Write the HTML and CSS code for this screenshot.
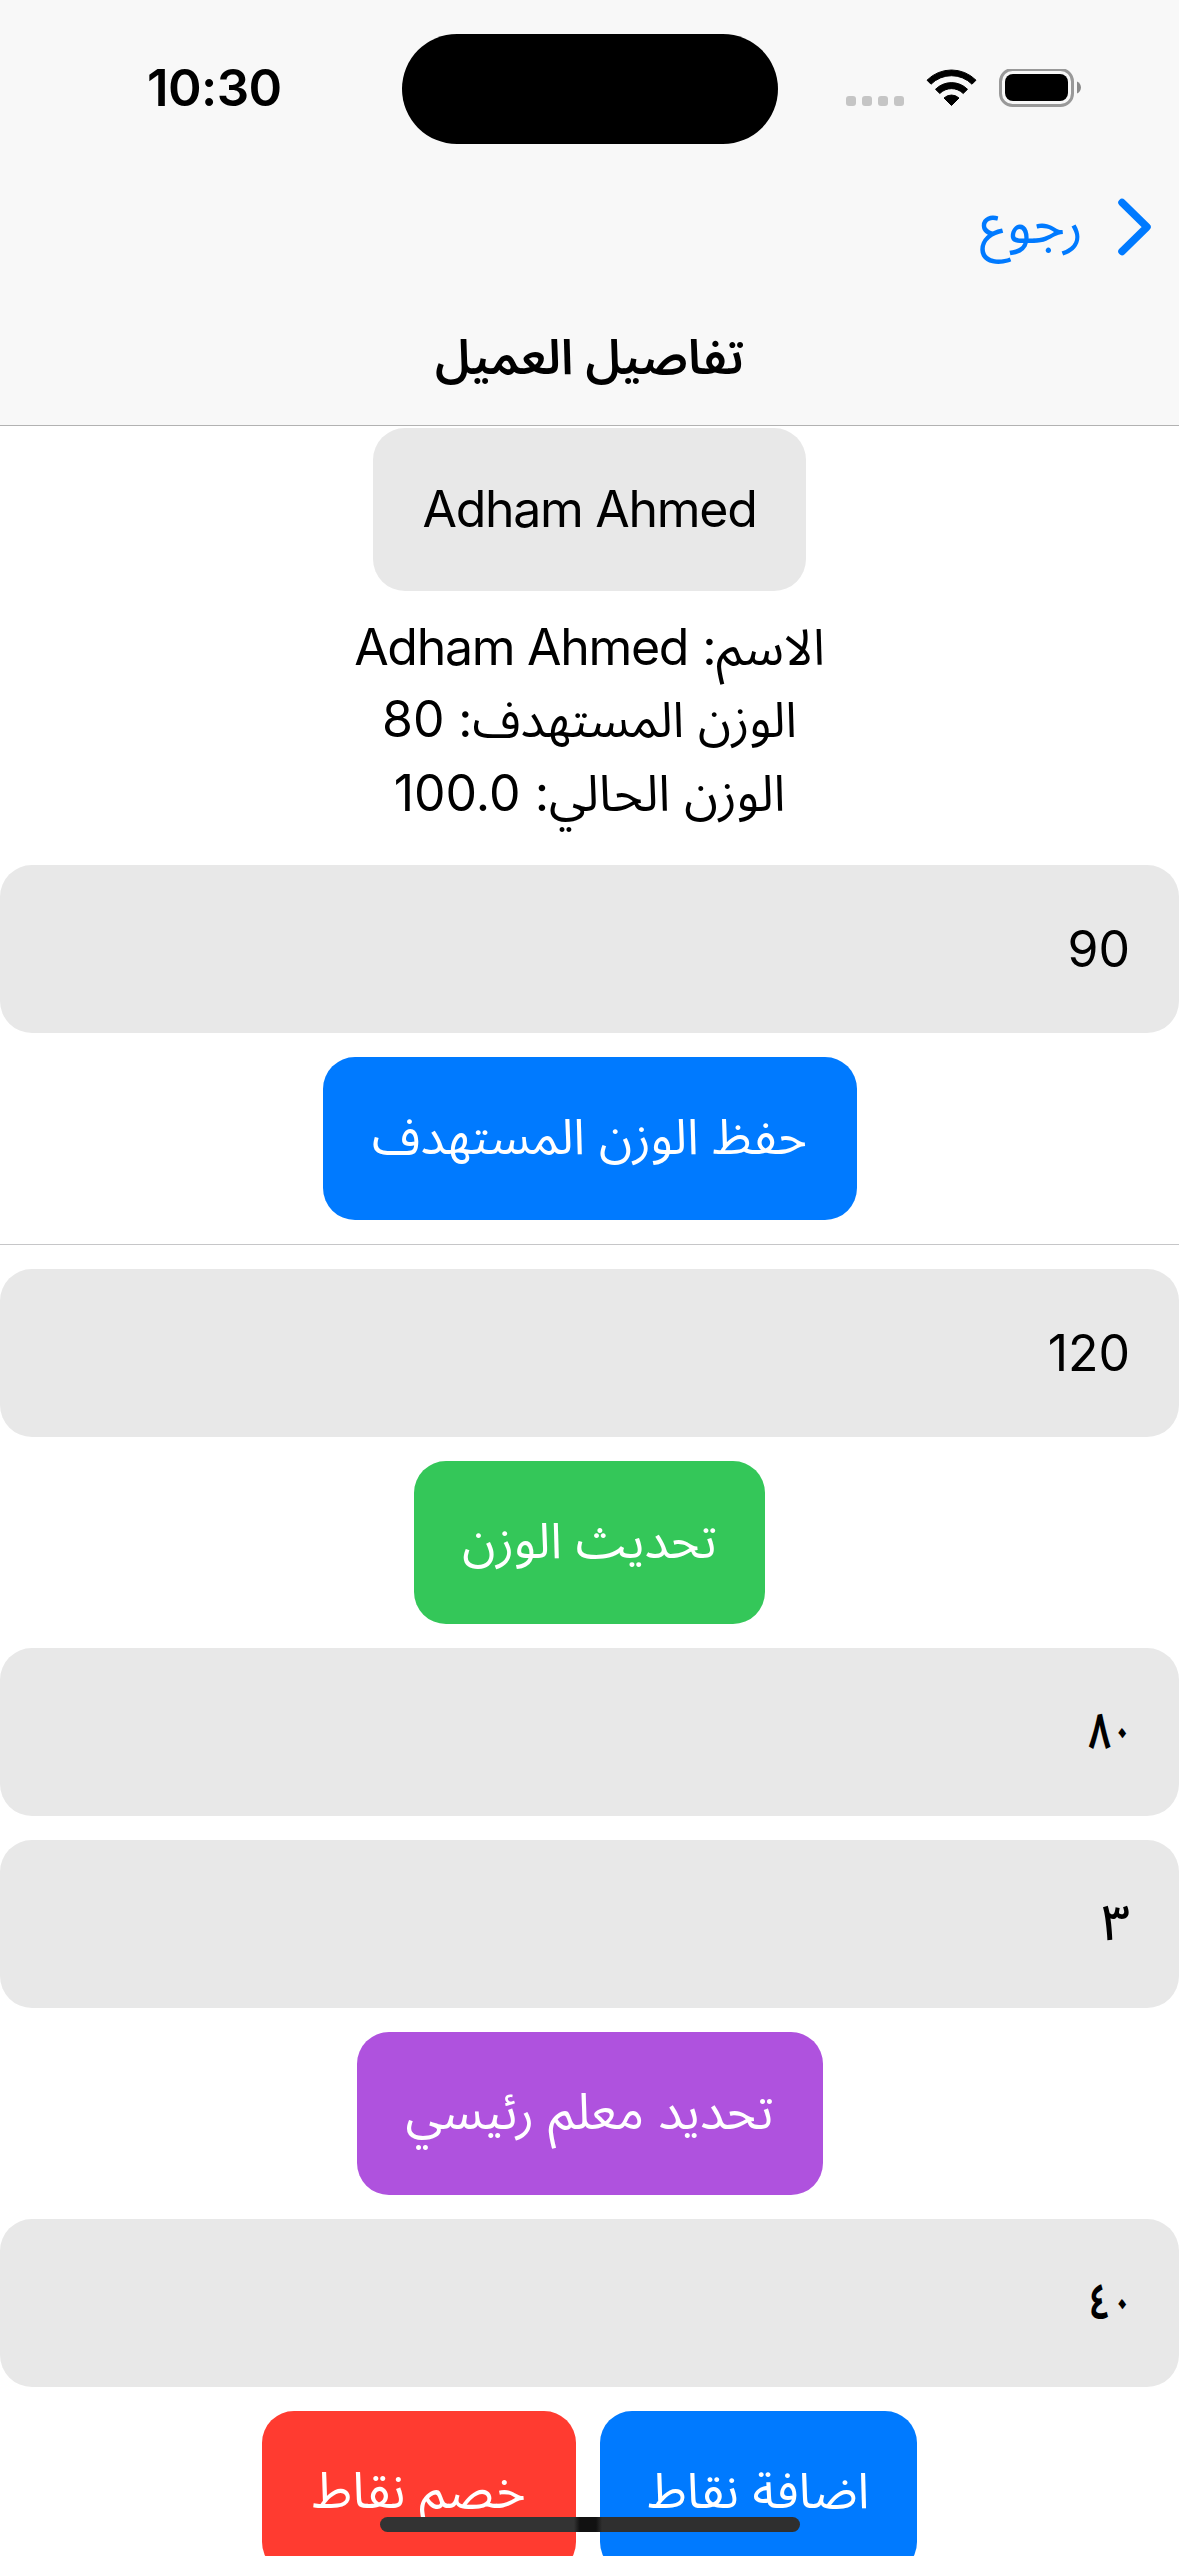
FILE: index.html
```html
<!DOCTYPE html>
<html lang="ar" dir="rtl">
<head>
<meta charset="utf-8">
<title>تفاصيل العميل</title>
<link rel="stylesheet" href="styles.css">
</head>
<body>
<div class="screen">
  <header class="header">
    <div class="status" dir="ltr">
      <div class="time">10:30</div>
      <div class="island"></div>
      <svg class="status-icons" width="236" height="40" viewBox="0 0 236 40">
        <g fill="#c5c5c5"><rect x="0" y="27" width="10" height="10" rx="3"/><rect x="16" y="27" width="10" height="10" rx="3"/><rect x="32" y="27" width="10" height="10" rx="3"/><rect x="48" y="27" width="10" height="10" rx="3"/></g>
        <path d="M81 11.2A34.500 34.500 0 0 1 130 11.200L126 15.200A29 29 0 0 0 85 15.200ZM89.500 20.300A22.500 22.500 0 0 1 121.500 20.300L117.200 24.500A16.500 16.500 0 0 0 93.800 24.500ZM98 29A11 11 0 0 1 113 29L105.500 36.500Z" stroke="#000" stroke-width="1" stroke-linejoin="round"/>
        <rect x="154.500" y="0.500" width="72" height="36" rx="12" fill="none" stroke="#999" stroke-width="3"/>
        <rect x="159" y="5" width="63" height="27" rx="8"/>
        <path d="M231 12.500C236.300 14.500 236.300 22.500 231 24.500Z" fill="#8a8a8a"/>
      </svg>
    </div>
    <div class="nav">
      <svg class="chevron" width="36" height="60" viewBox="0 0 36 60"><path d="M5 4.500L30 29L5 53.500" fill="none" stroke="#007aff" stroke-width="7.500" stroke-linecap="round" stroke-linejoin="round"/></svg>
      <span class="back">رجوع</span>
    </div>
    <h1 class="title">تفاصيل العميل</h1>
  </header>
  <main class="content">
    <div class="box name"><span dir="ltr" class="latin">Adham Ahmed</span></div>
    <div class="info">
      <p>الاسم: <span class="latin">Adham Ahmed</span></p>
      <p class="target">الوزن المستهدف: <span class="number">80</span></p>
      <p>الوزن الحالي: <span class="number">100.0</span></p>
    </div>
    <div class="field"><span>90</span></div>
    <div class="box save"><span>حفظ الوزن المستهدف</span></div>
    <div class="divider"></div>
    <div class="field"><span>120</span></div>
    <div class="box update"><span>تحديث الوزن</span></div>
    <div class="field"><span class="digits">٨٠</span></div>
    <div class="field"><span class="three">٣</span></div>
    <div class="box milestone"><span>تحديد معلم رئيسي</span></div>
    <div class="field"><span class="digits">٤٠</span></div>
    <div class="row">
      <div class="box add"><span>اضافة نقاط</span></div>
      <div class="box deduct"><span>خصم نقاط</span></div>
    </div>
  </main>
  <div class="home"></div>
</div>
</body>
</html>
```
FILE: styles.css
```css
* { box-sizing: border-box; }
body { margin: 0; background: #fff; color: #000; font-family: "Inter", "Noto Sans Arabic", "DejaVu Sans", sans-serif; font-size: 50px; }
.screen { position: relative; width: 1179px; height: 2556px; overflow: hidden; background: #fff; }
.header { height: 426px; background: #f8f8f8; border-bottom: 1px solid #b2b2b2; }
.status { display: flex; height: 177px; padding: 34px 96px 0 147px; }
.time { width: 255px; padding-top: 28px; font-size: 51px; font-weight: 600; line-height: 52px; letter-spacing: -0.6px; }
.island { width: 376px; height: 110px; border-radius: 55px; background: #000; }
.status-icons { margin: 35px 0 0 68px; }
.nav { display: flex; align-items: center; height: 102px; padding-right: 26px; color: #007aff; }
.chevron { flex: none; }
.back { margin: 0 34px 11px 0; font-size: 54.5px; line-height: 72px; }
.title { margin: 0; height: 146px; padding-top: 5px; line-height: 146px; text-align: center; font-size: 48.5px; font-weight: 600; }
.content { display: flex; flex-direction: column; align-items: center; gap: 24px; padding-top: 2px; }
.box { display: flex; align-items: center; justify-content: center; flex: none; height: 163px; padding-bottom: 2px; border-radius: 32px; color: #fff; font-size: 49.3px; white-space: nowrap; }
.name { width: 433px; background: #e8e8e8; color: #000; font-size: 50px; }
.latin { letter-spacing: -1.3px; }
.number { font-size: 50px; }
.info { height: 226px; }
.info p { position: relative; top: -4px; margin: 0; height: 73px; line-height: 73px; text-align: center; white-space: nowrap; }
.info .target { top: -5px; font-size: 49px; }
.field { display: flex; align-items: center; flex: none; width: 1179px; height: 168px; padding: 0 49px; border-radius: 32px; background: #e8e8e8; }
.digits { margin-right: -3px; font-weight: 600; transform: scaleX(0.78); transform-origin: right center; }
.three { font-weight: 500; }
.divider { width: 1179px; height: 1px; flex: none; background: #c6c6c8; }
.save { width: 534px; background: #007aff; }
.update { width: 351px; background: #34c759; }
.milestone { width: 466px; background: #af52de; font-size: 50.2px; }
.row { display: flex; gap: 24px; }
.add { width: 317px; background: #007aff; }
.deduct { width: 314px; background: #ff3b30; font-size: 50.5px; }
.home { position: absolute; left: 380px; top: 2517px; width: 420px; height: 15px; border-radius: 8px; background: linear-gradient(to right, #333 0 194px, #111 200px 216px, #2f2f2f 222px); }
```
